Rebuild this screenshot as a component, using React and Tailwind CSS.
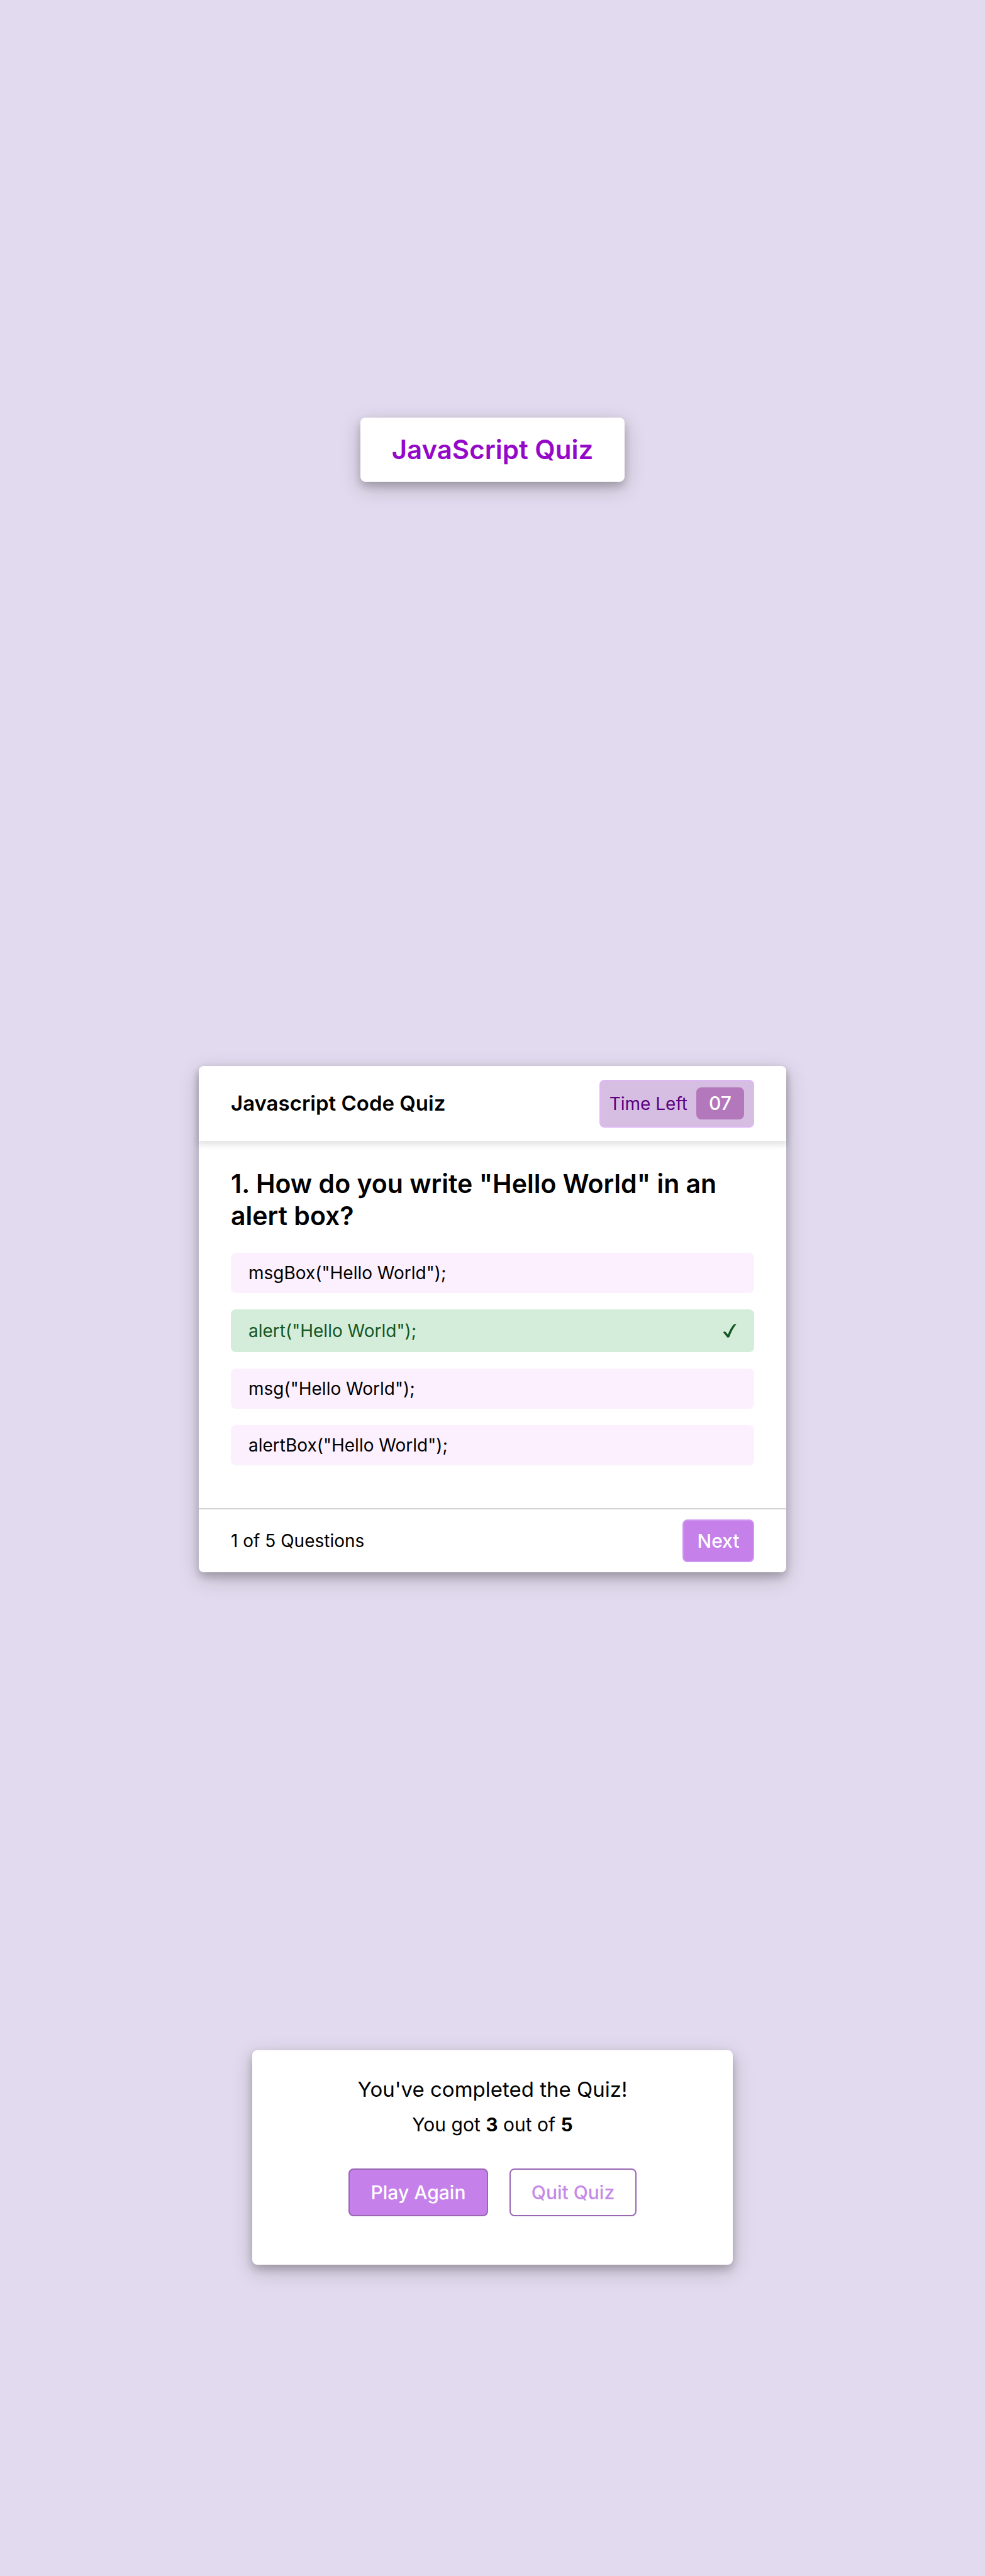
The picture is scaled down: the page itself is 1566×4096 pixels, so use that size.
const CARD_SHADOW =
  "shadow-[0_7px_14px_rgba(0,0,0,0.2),0_10px_34px_rgba(0,0,0,0.19)]";

const options = [
  { text: 'msgBox("Hello World");' },
  { text: 'alert("Hello World");', correct: true },
  { text: 'msg("Hello World");' },
  { text: 'alertBox("Hello World");' },
];

function CheckIcon() {
  return (
    <svg viewBox="0 0 22 22" className="size-[22px]" fill="currentColor" aria-hidden="true">
      <path d="M0.6 13.2C2 11.8 3.6 11.9 4.8 13.1L8.3 17.1C10.6 11 13.6 5.4 17.4 1.1C18.6 0 20.6 -0.1 21.7 0.6C17 6.4 13.4 13 10.8 20.6C9.8 22.1 7.8 22.1 6.8 20.9Z" />
    </svg>
  );
}

function StartCard() {
  return (
    <section className={`rounded-lg bg-white ${CARD_SHADOW}`}>
      <button
        type="button"
        className="block cursor-pointer px-[50px] py-6 text-[42px] leading-[54px] font-semibold text-[#9408c9]"
      >
        JavaScript Quiz
      </button>
    </section>
  );
}

function Option({ text, correct }) {
  return (
    <li>
      <button
        type="button"
        className={`flex w-full cursor-pointer items-center justify-between rounded-lg px-7 text-left text-[28px] leading-9 ${
          correct ? "bg-[#d4edda] py-4 text-[#155724]" : "bg-[#fcf0ff] py-3.5 text-black"
        }`}
      >
        <span>{text}</span>
        {correct && <CheckIcon />}
      </button>
    </li>
  );
}

function QuizCard() {
  return (
    <section className={`w-full max-w-[934px] rounded-lg bg-white ${CARD_SHADOW}`}>
      <header className="flex h-[119px] items-center justify-between rounded-t-lg px-[51px] shadow-[0_5px_8px_2px_rgba(0,0,0,0.1)]">
        <h1 className="text-[33px] font-semibold">Javascript Code Quiz</h1>
        <div className="flex h-[76px] items-center gap-3.5 rounded-lg border-2 border-[#deb8f5] bg-[#d6bee2] px-3.5">
          <span className="text-[28px] text-[#5c0080]">Time Left</span>
          <span className="flex h-[51px] w-[76px] items-center justify-center rounded-lg bg-[#b278bb] text-[30px] font-medium text-white">
            07
          </span>
        </div>
      </header>
      <div className="px-[51px] pt-[43px] pb-[68px]">
        <h2 className="text-[41px] leading-[51px] font-semibold">
          1. How do you write "Hello World" in an alert box?
        </h2>
        <ul className="mt-[33px] flex flex-col gap-[26px]">
          {options.map((o) => (
            <Option key={o.text} {...o} />
          ))}
        </ul>
      </div>
      <footer className="flex h-[102px] items-center justify-between border-t-2 border-[#d3d3d3] px-[51px]">
        <p className="text-[28px]">1 of 5 Questions</p>
        <button
          type="button"
          className="h-[68px] w-[114px] cursor-pointer rounded-lg border-2 border-[#d098ee] bg-[#c580e9] text-[30px] font-medium text-white"
        >
          Next
        </button>
      </footer>
    </section>
  );
}

function ResultCard() {
  return (
    <section
      className={`flex w-full max-w-[764px] flex-col items-center rounded-lg bg-white pt-[42px] pb-[77px] ${CARD_SHADOW}`}
    >
      <h2 className="text-[33px] leading-10">You've completed the Quiz!</h2>
      <p className="mt-4 text-[30px] leading-10">
        You got <strong>3</strong> out of <strong>5</strong>
      </p>
      <div className="mt-[50px] flex gap-[34px] text-[30px] font-medium">
        <button
          type="button"
          className="h-[76px] w-[222px] cursor-pointer rounded-lg border-2 border-[#9a66b4] bg-[#c580e9] text-white"
        >
          Play Again
        </button>
        <button
          type="button"
          className="h-[76px] w-[202px] cursor-pointer rounded-lg border-2 border-[#9a66b4] bg-white text-[#c58ae6]"
        >
          Quit Quiz
        </button>
      </div>
    </section>
  );
}

export default function App() {
  return (
    <main className="flex min-h-screen flex-col items-center bg-[#e2daee] px-6 pt-[664px] pb-[495px] font-[Inter,'Liberation_Sans',sans-serif] text-black">
      <StartCard />
      <div className="mt-[929px] flex w-full justify-center">
        <QuizCard />
      </div>
      <div className="mt-[760px] flex w-full justify-center">
        <ResultCard />
      </div>
    </main>
  );
}
